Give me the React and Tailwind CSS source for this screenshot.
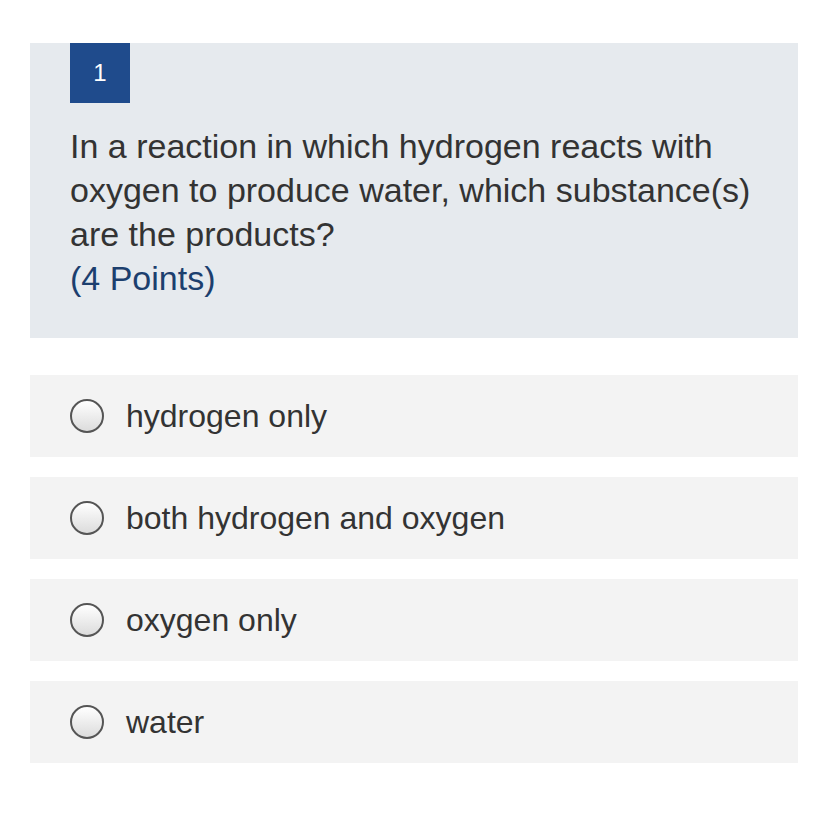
import React from 'react';

const options = ['hydrogen only', 'both hydrogen and oxygen', 'oxygen only', 'water'];

function Radio() {
  return (
    <span className="block w-[34px] h-[34px] rounded-full border-2 border-[#555] bg-gradient-to-b from-white to-[#dcdcdc] shrink-0" />
  );
}

export default function App() {
  return (
    <div className="min-h-screen bg-white pt-[43px] px-[30px] font-['Liberation_Sans',Arial,sans-serif]">
      <div className="bg-[#e6eaee] px-[40px] pb-[38px]">
        <div className="w-[60px] h-[60px] bg-[#1f4b8c] text-white text-[24px] flex items-center justify-center">
          1
        </div>
        <p className="mt-[21px] text-[34px] leading-[44px] text-[#333]">
          In a reaction in which hydrogen reacts with oxygen to produce water, which substance(s) are the products?
          <br />
          <span className="text-[#1c3f6e]">(4 Points)</span>
        </p>
      </div>
      <div className="mt-[37px] flex flex-col gap-[20px]">
        {options.map((o) => (
          <label key={o} className="h-[82px] bg-[#f3f3f3] flex items-center gap-[22px] pl-[40px] pr-[40px]">
            <Radio />
            <span className="text-[32px] text-[#333]">{o}</span>
          </label>
        ))}
      </div>
    </div>
  );
}
